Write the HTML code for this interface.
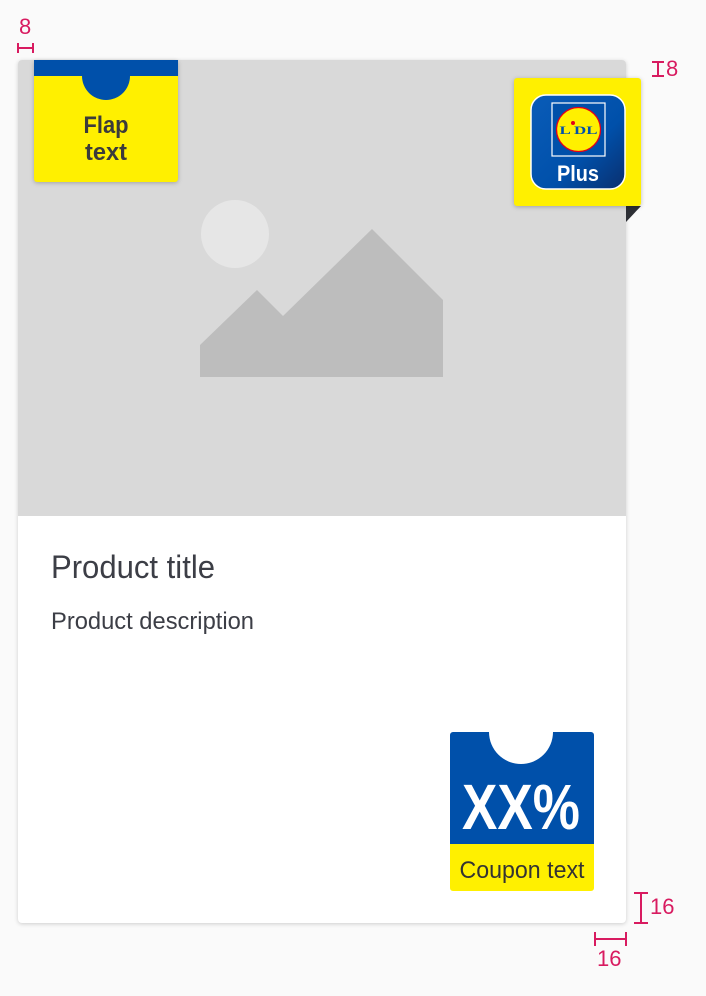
<!DOCTYPE html>
<html><head><style>
*{margin:0;padding:0;box-sizing:border-box}
body{width:706px;height:996px;background:#fafafa;position:relative;overflow:hidden;font-family:"Liberation Sans",sans-serif}
.a{position:absolute}
.pk{color:#d81b60;font-size:22px;font-family:"Liberation Sans",sans-serif}
</style></head><body>
<div class="a" style="left:18px;top:60px;width:608px;height:863px;background:#fff;border-radius:4px;box-shadow:0 1px 4px rgba(0,0,0,.18);overflow:hidden">
 <div class="a" style="left:0;top:0;width:608px;height:456px;background:#d9d9d9"></div>
</div>
<svg class="a" style="left:0;top:0" width="706" height="996">
 <circle cx="235" cy="234" r="34" fill="#e6e6e6"/>
 <polygon points="200,345 257,290 283,316 372,229 443,300 443,377 200,377" fill="#bdbdbd"/>
 <!-- flap -->
 <rect x="34" y="60" width="144" height="122" rx="3" fill="#fff000" style="filter:drop-shadow(0 1px 2px rgba(0,0,0,.25))"/>
 <rect x="34" y="60" width="144" height="16" fill="#0050aa"/>
 <path d="M82 76 A24 24 0 0 0 130 76Z" fill="#0050aa"/>
 <!-- lidl plus -->
 <polygon points="626,206 641,206 626,222" fill="#2d2f35"/>
 <rect x="514" y="78" width="127" height="128" rx="3" fill="#fff000" style="filter:drop-shadow(0 1px 2px rgba(0,0,0,.25))"/>
 <defs><linearGradient id="g" x1="0" y1="0" x2="1" y2="1"><stop offset="0" stop-color="#0a5cb8"/><stop offset=".6" stop-color="#0050aa"/><stop offset="1" stop-color="#0a2f6e"/></linearGradient></defs>
 <rect x="531" y="95" width="94" height="94" rx="15" fill="url(#g)" stroke="#fff" stroke-width="1.5"/>
 <rect x="552" y="103" width="53" height="53" fill="#0050aa" stroke="#fff" stroke-width="1.2"/>
 <circle cx="578.5" cy="129.5" r="22" fill="#fff000" stroke="#e2001a" stroke-width="1.3"/>
 <text x="578.5" y="134" text-anchor="middle" font-family="Liberation Serif" font-weight="bold" font-size="12" fill="#0050aa" textLength="38" lengthAdjust="spacingAndGlyphs">L DL</text>
 <circle cx="573" cy="123" r="2" fill="#e2001a"/>
 <text x="578" y="181" text-anchor="middle" font-family="Liberation Sans" font-weight="bold" font-size="22" fill="#fff" textLength="42" lengthAdjust="spacingAndGlyphs">Plus</text>
 <!-- coupon -->
 <path d="M453 732 H489 A32 32 0 0 0 553 732 H591 A3 3 0 0 1 594 735 V844 H450 V735 A3 3 0 0 1 453 732Z" fill="#0050aa"/>
 <path d="M450 844 H594 V888 A3 3 0 0 1 591 891 H453 A3 3 0 0 1 450 888Z" fill="#fff000"/>
 <text x="521" y="829" text-anchor="middle" font-family="Liberation Sans" font-weight="bold" font-size="64" fill="#fff" textLength="118" lengthAdjust="spacingAndGlyphs">XX%</text>
 <text x="522" y="878" text-anchor="middle" font-family="Liberation Sans" font-size="24" fill="#333" textLength="125" lengthAdjust="spacingAndGlyphs">Coupon text</text>
 <text x="51" y="578" font-family="Liberation Sans" font-size="32" fill="#3c3e46" textLength="164" lengthAdjust="spacingAndGlyphs">Product title</text>
 <text x="51" y="629" font-family="Liberation Sans" font-size="24" fill="#3c3e46" textLength="203" lengthAdjust="spacingAndGlyphs">Product description</text>
 <text x="106" y="133" text-anchor="middle" font-family="Liberation Sans" font-weight="bold" font-size="24" fill="#3b3b3b" textLength="45" lengthAdjust="spacingAndGlyphs">Flap</text>
 <text x="106" y="160" text-anchor="middle" font-family="Liberation Sans" font-weight="bold" font-size="24" fill="#3b3b3b" textLength="42" lengthAdjust="spacingAndGlyphs">text</text>
 <!-- annotations -->
 <g stroke="#d81b60" stroke-width="2" fill="none">
  <path d="M18 43v10M33 43v10M18 48h15"/>
  <path d="M652 62h12M652 76h12M658 62v14"/>
  <path d="M634 893h14M634 923h14M641 893v30"/>
  <path d="M595 932v14M626 932v14M595 939h31"/>
 </g>
</svg>
<div class="a pk" style="left:19px;top:14px">8</div>
<div class="a pk" style="left:666px;top:56px">8</div>
<div class="a pk" style="left:650px;top:894px">16</div>
<div class="a pk" style="left:597px;top:946px">16</div>
</body></html>
